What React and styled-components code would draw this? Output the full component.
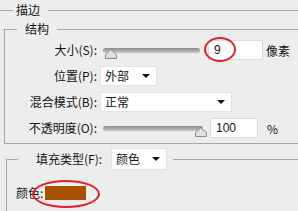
import React from 'react'
import styled, { createGlobalStyle } from 'styled-components'

const GlobalStyle = createGlobalStyle`
  html, body {
    margin: 0;
    padding: 0;
    background: #ededed;
  }
  body {
    font-family: "Noto Sans CJK SC", "Liberation Sans", sans-serif;
    font-size: 12px;
    color: #141414;
  }
`

const Page = styled.div`
  position: relative;
  width: 298px;
  height: 211px;
  overflow: hidden;
  background: #ededed;
`

const StrokePanel = styled.fieldset`
  width: 340px;
  margin: 2px 0 0 0;
  padding: 3px 0 0 0;
  border: none;
  border-top: 1px solid #a7a7a7;
  min-width: 0;
`

const Section = styled.fieldset`
  margin: ${p => p.$margin};
  padding: ${p => p.$padding};
  border: 1px solid #a7a7a7;
  border-right: none;
  min-width: 0;
  min-height: ${p => p.$minHeight || 0};
`

const Legend = styled.legend`
  margin-left: ${p => p.$offset};
  padding: ${p => p.$pad};
  font-size: 12px;
  line-height: 16px;
  white-space: nowrap;
`

const FillLegend = styled.legend`
  display: flex;
  align-items: center;
  gap: 9px;
  margin-left: 11px;
  padding: 0 6px 0 18px;
  line-height: 16px;
`

const Rows = styled.div`
  display: grid;
  grid-template-columns: 92px 1fr;
  grid-auto-rows: 24px;
  row-gap: 2px;
  column-gap: 3px;
  align-items: center;
`

const Label = styled.span`
  text-align: right;
  white-space: nowrap;
  line-height: 16px;
`

const Controls = styled.div`
  display: flex;
  align-items: center;
`

const Slider = styled.div`
  position: relative;
  width: ${p => p.$width}px;
  height: 5px;
  margin-left: 3px;
  border-radius: 3px;
  background: linear-gradient(#8a8a8a, #a9a9a9 50%, #c9c9c9);
`

const Thumb = styled.svg`
  position: absolute;
  top: 1px;
  width: 12px;
  height: 10px;
`

const FieldWrap = styled.div`
  position: relative;
  margin-left: ${p => p.$gap}px;
`

const Field = styled.div`
  box-sizing: border-box;
  width: ${p => p.$width}px;
  height: 20px;
  padding-left: 5px;
  background: #fff;
  border: 1px solid #dcdcdc;
  font-family: "Liberation Sans", "Noto Sans CJK SC", sans-serif;
  font-size: 12px;
  line-height: 18px;
`

const Unit = styled.span`
  margin-left: ${p => p.$gap}px;
  white-space: nowrap;
`

const Select = styled.div`
  box-sizing: border-box;
  display: flex;
  align-items: center;
  justify-content: space-between;
  width: ${p => p.$width}px;
  height: ${p => p.$height || 20}px;
  padding: 0 6px 0 4px;
  background: #fff;
  border: 1px solid #e2e2e2;
  line-height: 16px;
`

const Arrow = styled.span`
  width: 0;
  height: 0;
  border-left: 4px solid transparent;
  border-right: 4px solid transparent;
  border-top: 4px solid #111;
`

const ColorRow = styled.div`
  display: flex;
  align-items: center;
  gap: 2px;
  padding: 14px 0 0 9px;
`

const SwatchWrap = styled.div`
  position: relative;
`

const Swatch = styled.div`
  width: 41px;
  height: 14px;
  background: #a65100;
`

const Mark = styled.div`
  position: absolute;
  left: ${p => p.$x}px;
  top: ${p => p.$y}px;
  width: ${p => p.$w}px;
  height: ${p => p.$h}px;
  box-sizing: border-box;
  border: 2px solid #e2202a;
  border-radius: 50%;
  pointer-events: none;
`

function RangeSlider({ width, pos }) {
  return (
    <Slider $width={width}>
      <Thumb viewBox="0 0 12 10" style={{ left: pos - 6 }}>
        <polygon points="0.5,9.5 0.5,5.5 6,0.5 11.5,5.5 11.5,9.5" fill="#dedede" stroke="#8c8c8c" />
      </Thumb>
    </Slider>
  )
}

export default function App() {
  return (
    <Page>
      <GlobalStyle />
      <StrokePanel>
        <Legend $offset="13px" $pad="0 8px 0 3px">描边</Legend>
        <Section $margin="0 0 0 4px" $padding="1px 0 3px 0">
          <Legend $offset="12px" $pad="0 8px">结构</Legend>
          <Rows>
            <Label>大小(S):</Label>
            <Controls>
              <RangeSlider width={97} pos={8} />
              <FieldWrap $gap={8}>
                <Field $width={55}>9</Field>
                <Mark $x={-4} $y={-3} $w={32} $h={25} />
              </FieldWrap>
              <Unit $gap={3}>像素</Unit>
            </Controls>

            <Label>位置(P):</Label>
            <Controls>
              <Select $width={57}>外部<Arrow /></Select>
            </Controls>

            <Label>混合模式(B):</Label>
            <Controls>
              <Select $width={132}>正常<Arrow /></Select>
            </Controls>

            <Label>不透明度(O):</Label>
            <Controls>
              <RangeSlider width={100} pos={98} />
              <FieldWrap $gap={7}>
                <Field $width={48}>100</Field>
              </FieldWrap>
              <Unit $gap={9}>%</Unit>
            </Controls>
          </Rows>
        </Section>

        <Section $margin="4px 0 0 6px" $padding="0" $minHeight="80px">
          <FillLegend>
            填充类型(F):
            <Select $width={56} $height={22}>颜色<Arrow /></Select>
          </FillLegend>
          <ColorRow>
            颜色:
            <SwatchWrap>
              <Swatch />
              <Mark $x={-13} $y={-6} $w={68} $h={28} />
            </SwatchWrap>
          </ColorRow>
        </Section>
      </StrokePanel>
    </Page>
  )
}
